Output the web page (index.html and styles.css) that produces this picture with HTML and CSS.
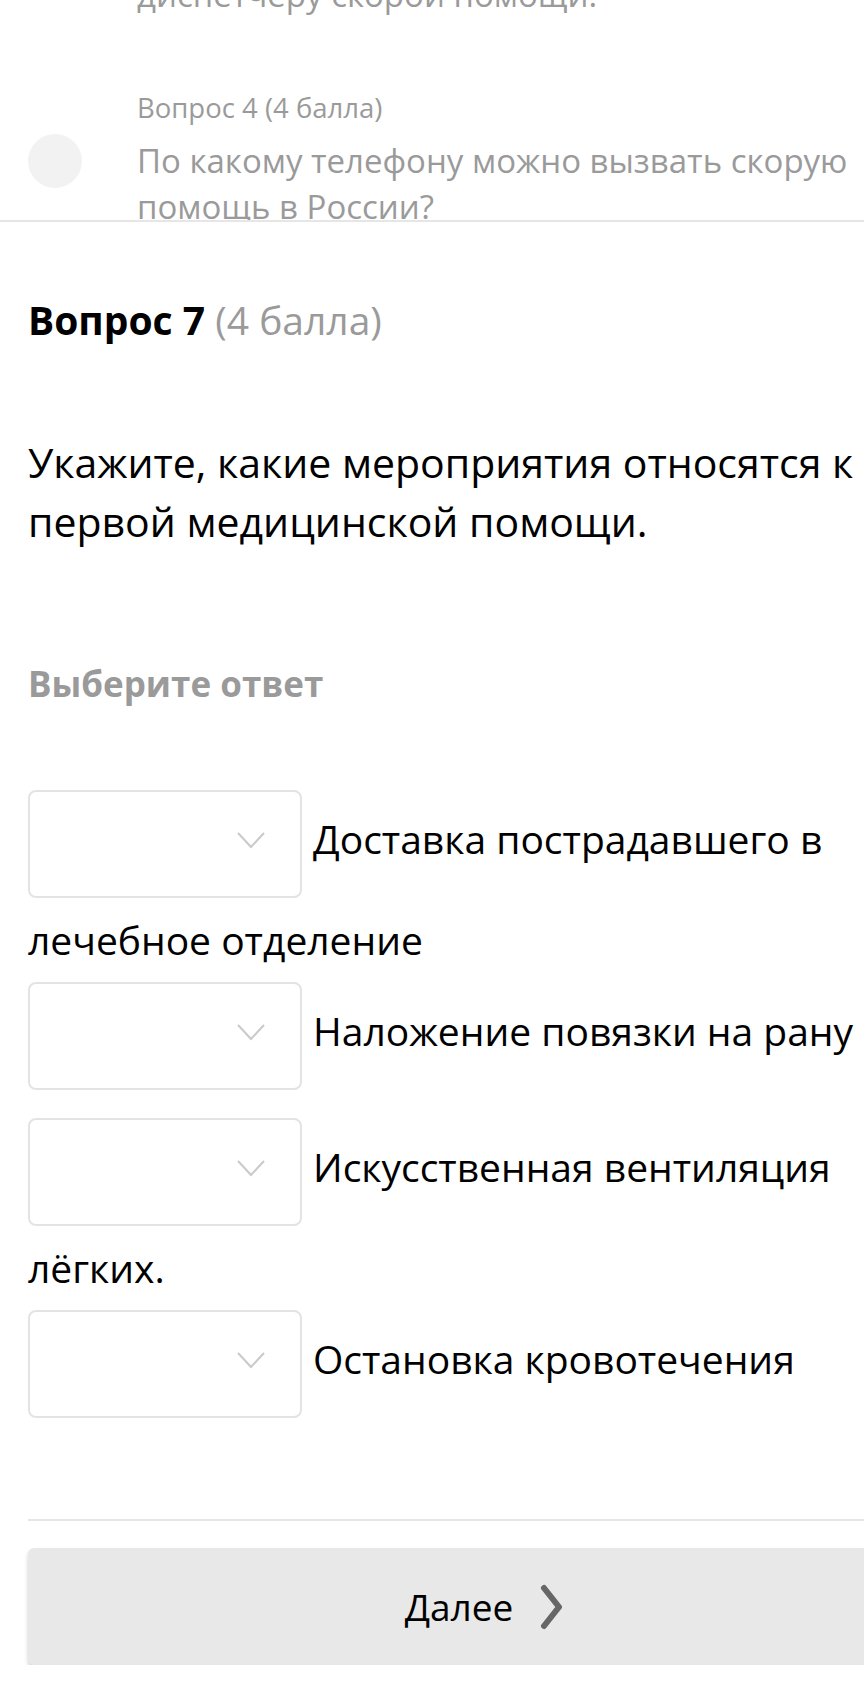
FILE: index.html
```html
<!DOCTYPE html>
<html>
	<head>
		<meta charset="utf-8">
		<title>Вопрос 7</title>
		<link rel="stylesheet" href="styles.css">
	</head>
	<body>
	<div class="prev">
		<div class="prev_item prev_cut">
			<div class="prev_mark"></div>
			<div class="prev_body">
				<p class="prev_text">диспетчеру скорой помощи.</p>
			</div>
		</div>
		<div class="prev_item">
			<div class="prev_mark"><span class="dot"></span></div>
			<div class="prev_body">
				<p class="prev_meta">Вопрос 4 (4 балла)</p>
				<p class="prev_text">По какому телефону можно вызвать скорую помощь в России?</p>
			</div>
		</div>
	</div>
	<div class="main">
		<h2 class="q_title"><b>Вопрос 7</b> <span>(4 балла)</span></h2>
		<p class="q_text">Укажите, какие мероприятия относятся к первой медицинской помощи.</p>
		<h3 class="q_hint">Выберите ответ</h3>
		<div class="answers">
			<div class="answer">
				<span class="select"><svg class="arrow" width="28" height="17" viewBox="0 0 28 17"><path d="M1 1 L14 15 L27 1" fill="none" stroke="#c9c9c9" stroke-width="2"/></svg></span>Доставка пострадавшего в лечебное отделение
			</div>
			<div class="answer">
				<span class="select"><svg class="arrow" width="28" height="17" viewBox="0 0 28 17"><path d="M1 1 L14 15 L27 1" fill="none" stroke="#c9c9c9" stroke-width="2"/></svg></span>Наложение повязки на рану
			</div>
			<div class="answer">
				<span class="select"><svg class="arrow" width="28" height="17" viewBox="0 0 28 17"><path d="M1 1 L14 15 L27 1" fill="none" stroke="#c9c9c9" stroke-width="2"/></svg></span>Искусственная вентиляция лёгких.
			</div>
			<div class="answer">
				<span class="select"><svg class="arrow" width="28" height="17" viewBox="0 0 28 17"><path d="M1 1 L14 15 L27 1" fill="none" stroke="#c9c9c9" stroke-width="2"/></svg></span>Остановка кровотечения
			</div>
		</div>
	</div>
	<div class="footer">
		<a href="javascript:;" class="next">Далее
			<svg width="26" height="46" viewBox="0 0 26 46"><path d="M5 4 L20 23 L5 42" fill="none" stroke="#666" stroke-width="6" stroke-linecap="round" stroke-linejoin="round"/></svg>
		</a>
	</div>
	</body>
</html>
```

FILE: styles.css
```css
*{ margin: 0; padding: 0; text-decoration: none; list-style-type: none; box-sizing: border-box; }
html{ background-color: #fff; }
body{ font-family: "Open Sans", "Noto Sans", sans-serif; color: #000; overflow-x: hidden; }
/*上面的题目列表*/
.prev{ height: 222px; overflow: hidden; border-bottom: 2px solid #e6e6e6; color: #9a9a9a; }
.prev_item{ display: flex; }
.prev_cut{ margin-top: -28px; height: 116px; }
.prev_mark{ width: 137px; flex: none; padding: 46px 0 0 28px; }
.prev_cut .prev_mark{ padding: 0; }
.prev_mark .dot{ display: block; width: 54px; height: 54px; border-radius: 50%; background-color: #f2f2f2; }
.prev_body{ flex: 1; }
.prev_meta{ font-size: 27.5px; line-height: 40px; margin-bottom: 10px; }
.prev_text{ font-size: 33px; line-height: 46px; }
/*当前题目*/
.main{ padding: 0 2px 0 28px; }
.q_title{ font-size: 39px; line-height: 50px; padding-top: 73px; font-weight: normal; }
.q_title b{ font-weight: 700; }
.q_title span{ color: #9a9a9a; }
.q_text{ font-size: 41px; line-height: 59px; margin-top: 88px; }
.q_hint{ font-size: 35px; line-height: 50px; margin-top: 108px; color: #9a9a9a; font-weight: 700; }
.answers{ margin-top: 67px; }
.answer{ font-size: 39px; line-height: 56px; }
.answer .select{ display: inline-block; vertical-align: middle; position: relative; width: 274px; height: 108px; margin: 14px 11px 14px 0; border: 2px solid #e3e3e3; border-radius: 8px; }
.answer .arrow{ position: absolute; right: 35px; top: 40px; }
/*底部*/
.footer{ margin: 87px 0 0 28px; border-top: 2px solid #e6e6e6; padding-top: 27px; }
.next{ display: flex; align-items: center; justify-content: center; gap: 26px; height: 117px; padding-left: 78px; background-color: #e8e8e8; border-radius: 6px 0 0 6px; color: #000; font-size: 37px; box-shadow: 0 3px 4px rgba(0,0,0,0.18); }
```
